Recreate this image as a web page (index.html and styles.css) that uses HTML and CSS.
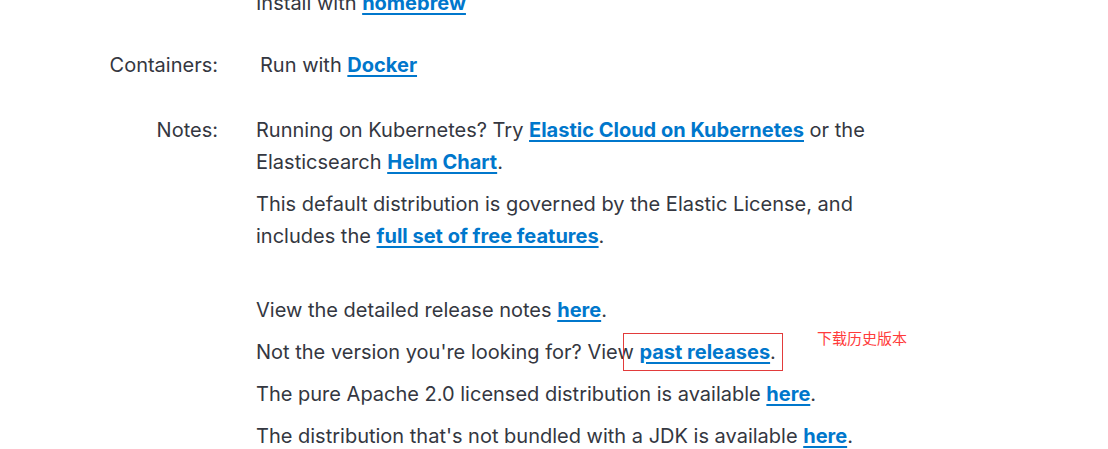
FILE: index.html
```html
<!DOCTYPE html>
<html lang="en">
<head>
<meta charset="utf-8">
<title>Download Elasticsearch</title>
<link rel="stylesheet" href="styles.css">
</head>
<body>
<div class="page">
  <div class="row row-first">
    <div class="label"></div>
    <div class="content"><p>Install with <a href="#">homebrew</a></p></div>
  </div>
  <div class="row row-containers">
    <div class="label">Containers:</div>
    <div class="content indent"><p>Run with <a href="#">Docker</a></p></div>
  </div>
  <div class="row">
    <div class="label">Notes:</div>
    <div class="content">
      <p>Running on Kubernetes? Try <a href="#">Elastic Cloud on Kubernetes</a> or the Elasticsearch <a href="#">Helm Chart</a>.</p>
      <p>This default distribution is governed by the Elastic License, and includes the <a href="#">full set of free features</a>.<br><br></p>
      <p>View the detailed release notes <a href="#">here</a>.</p>
      <p>Not the version you're looking for? View <a href="#">past releases</a>.</p>
      <p>The pure Apache 2.0 licensed distribution is available <a href="#">here</a>.</p>
      <p>The distribution that's not bundled with a JDK is available <a href="#">here</a>.</p>
    </div>
  </div>
  <div class="mark-box"></div>
  <div class="mark-note">下载历史版本</div>
</div>
</body>
</html>
```
FILE: styles.css
```css
html, body {
  margin: 0;
  padding: 0;
  background: #ffffff;
}
body {
  font-family: Inter, "Noto Sans", "Liberation Sans", sans-serif;
  font-size: 20px;
  line-height: 32px;
  color: #343741;
}
.page {
  position: relative;
  display: flow-root;
  width: 1108px;
  height: 449px;
  overflow: hidden;
}
.row {
  display: grid;
  grid-template-columns: 218px 640px;
  column-gap: 38px;
}
.row-first {
  margin-top: -13px;
  margin-bottom: 30px;
}
.row-containers {
  margin-bottom: 33px;
}
.label {
  text-align: right;
}
.content p {
  margin: 0 0 10px 0;
}
.row-first .content p,
.row-containers .content p {
  margin: 0;
}
.indent {
  padding-left: 4px;
}
a {
  color: #0077cc;
  font-weight: 700;
  text-decoration: underline;
  text-decoration-thickness: 2px;
  text-underline-offset: 3px;
}
.mark-box {
  position: absolute;
  left: 623px;
  top: 333px;
  width: 160px;
  height: 38px;
  box-sizing: border-box;
  border: 1px solid #e23b3b;
}
.mark-note {
  position: absolute;
  left: 817px;
  top: 329px;
  font-family: "Noto Sans CJK SC", "Noto Sans", sans-serif;
  font-size: 15px;
  line-height: 18px;
  color: #ff3b3b;
}
```
